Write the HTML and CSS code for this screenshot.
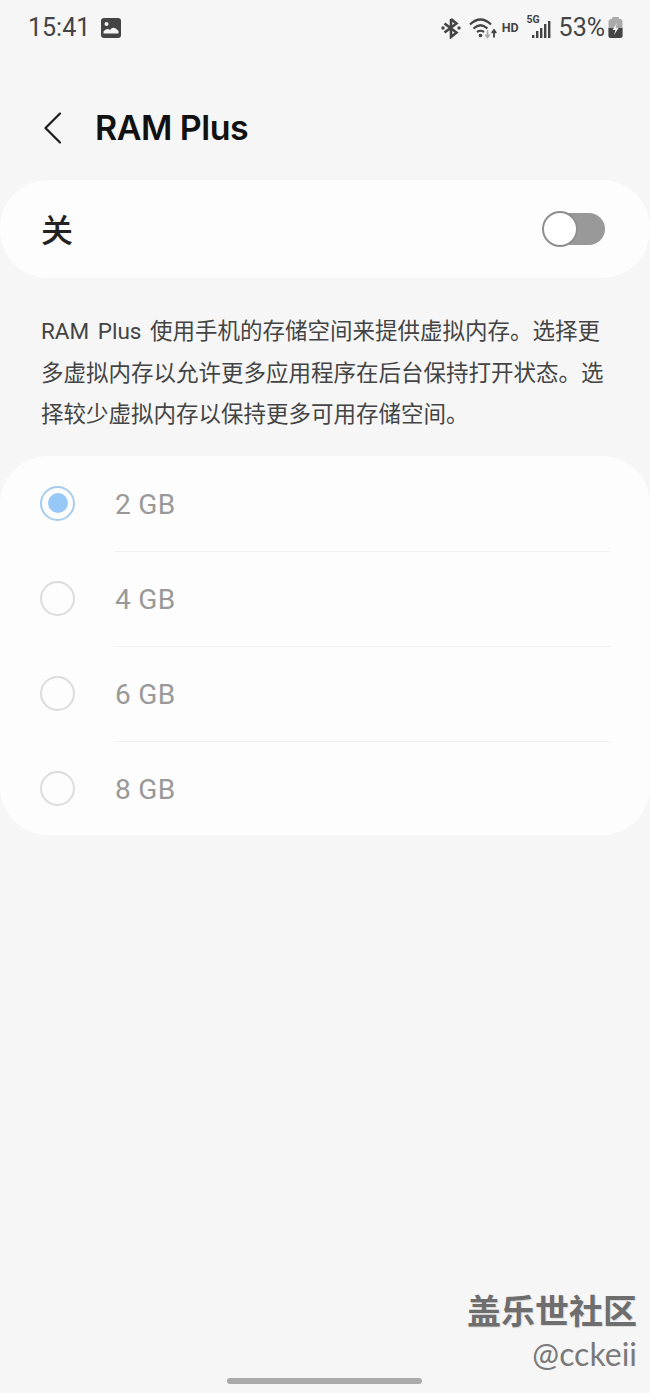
FILE: index.html
```html
<!DOCTYPE html>
<html lang="zh-CN">
<head>
  <meta charset="UTF-8">
  <meta name="viewport" content="width=device-width, initial-scale=1.0">
  <title>RAM Plus</title>
  <link rel="stylesheet" href="styles.css">
</head>
<body>
  <div class="screen">
    <div class="status-bar">
      <div class="status-left">
        <span class="clock">15:41</span>
        <svg class="pic-icon" width="20" height="20" viewBox="0 0 20 20">
          <rect x="0" y="0" width="20" height="20" rx="3" fill="#444"/>
          <circle cx="5.5" cy="6" r="2" fill="#f6f6f6"/>
          <path d="M2.5 15.5 L2.5 13.5 Q6 9.5 9 12 Q12.5 7 17.5 13 L17.5 15.5 Z" fill="#f6f6f6"/>
        </svg>
      </div>
      <div class="status-right">
        <svg class="bt-icon" width="20" height="22" viewBox="0 0 20 22" fill="none" stroke="#444" stroke-width="2.6">
          <path d="M10 2 V20 L15.5 15.5 L3.5 6.5 M10 2 L15.5 6.5 L3.5 15.5"/>
          <circle cx="2" cy="11" r="1.7" fill="#444" stroke="none"/>
          <circle cx="18" cy="11" r="1.7" fill="#444" stroke="none"/>
        </svg>
        <svg class="wifi-icon" width="28" height="22" viewBox="0 0 28 22" fill="none" stroke="#444" stroke-width="2.2">
          <path d="M1 7.5 Q11.5 -2.5 22 7.5"/>
          <path d="M4.5 11.5 Q11.5 5 18.5 11.5"/>
          <path d="M8 15 Q11.5 12.5 15 15"/>
          <circle cx="11.5" cy="18.5" r="1.8" fill="#444" stroke="none"/>
          <path d="M18.5 13 V20 M16.3 17.5 L18.5 20.5 L20.7 17.5" stroke="#aaa" stroke-width="1.6"/>
          <path d="M25 20.5 V13.5 M22.8 16 L25 13 L27.2 16" stroke-width="1.8"/>
        </svg>
        <span class="hd">HD</span>
        <div class="signal">
          <span class="five-g">5G</span>
          <svg width="19" height="20" viewBox="0 0 19 20" fill="#444">
            <rect x="0" y="15" width="2.4" height="3"/>
            <rect x="4" y="11" width="2.4" height="7"/>
            <rect x="8" y="8" width="2.4" height="10"/>
            <rect x="12" y="4" width="2.4" height="14"/>
            <rect x="16" y="1" width="2.4" height="17"/>
          </svg>
        </div>
        <span class="battery-text">53%</span>
        <svg class="battery" width="15" height="22" viewBox="0 0 15 22">
          <rect x="4" y="0" width="7" height="3" rx="1" fill="#aaa"/>
          <rect x="0.5" y="2" width="14" height="19" rx="2.5" fill="#aaa"/>
          <path d="M0.5 11 H14.5 V18.5 Q14.5 21 12 21 H3 Q0.5 21 0.5 18.5 Z" fill="#444"/>
          <path d="M9 6 L4.5 13 H7.5 L6 18 L10.5 11 H7.5 Z" fill="#f6f6f6"/>
        </svg>
      </div>
    </div>

    <div class="title-bar">
      <svg class="back" width="20" height="32" viewBox="0 0 20 32" fill="none" stroke="#1c1c1c" stroke-width="2.2" stroke-linecap="round" stroke-linejoin="round">
        <path d="M18 1.5 L3.5 16 L18 30.5"/>
      </svg>
      <h1 class="title">RAM Plus</h1>
    </div>

    <div class="card master-row">
      <span class="master-label">关</span>
      <div class="switch"><div class="switch-thumb"></div></div>
    </div>

    <p class="description">RAM Plus 使用手机的存储空间来提供虚拟内存。选择更多虚拟内存以允许更多应用程序在后台保持打开状态。选择较少虚拟内存以保持更多可用存储空间。</p>

    <div class="card options">
      <div class="option">
        <span class="radio radio-on"><span class="radio-dot"></span></span>
        <span class="option-label">2 GB</span>
      </div>
      <div class="option">
        <span class="radio"></span>
        <span class="option-label">4 GB</span>
      </div>
      <div class="option">
        <span class="radio"></span>
        <span class="option-label">6 GB</span>
      </div>
      <div class="option">
        <span class="radio"></span>
        <span class="option-label">8 GB</span>
      </div>
    </div>

    <div class="home-bar"></div>

    <div class="watermark">
      <div class="wm-title">盖乐世社区</div>
      <div class="wm-user">@cckeii</div>
    </div>
  </div>
</body>
</html>
```

FILE: styles.css
```css
html, body {
  margin: 0;
  padding: 0;
}
body {
  font-family: Roboto, "Noto Sans CJK SC", sans-serif;
  background-color: #f6f6f6;
}
.screen {
  position: relative;
  width: 650px;
  height: 1393px;
  display: flex;
  flex-direction: column;
  overflow: hidden;
}

/* status bar */
.status-bar {
  height: 55px;
  padding: 0 27px 0 28px;
  display: flex;
  align-items: center;
  justify-content: space-between;
  color: #444;
}
.status-left {
  display: flex;
  align-items: center;
  gap: 11px;
}
.clock {
  font-size: 25px;
}
.status-right {
  display: flex;
  align-items: center;
}
.bt-icon {
  margin-right: 8px;
}
.wifi-icon {
  margin-right: 5px;
}
.hd {
  font-size: 12.5px;
  font-weight: 700;
  margin-right: 8px;
}
.signal {
  position: relative;
  width: 24px;
  height: 22px;
  margin-right: 8px;
}
.signal svg {
  display: block;
  margin: 3px 0 0 5px;
}
.five-g {
  position: absolute;
  left: 0;
  top: -4px;
  font-size: 10.5px;
  font-weight: 700;
}
.battery-text {
  font-size: 25px;
  margin-right: 3px;
}

/* title */
.title-bar {
  height: 125px;
  display: flex;
  align-items: center;
  box-sizing: border-box;
  padding: 20px 0 0 42px;
}
.back {
  margin-right: 33px;
}
.title {
  margin: 0;
  font-family: Inter, Roboto, sans-serif;
  font-size: 34px;
  font-weight: 600;
  letter-spacing: -0.5px;
  color: #111;
}

/* cards */
.card {
  background-color: #fdfdfd;
}
.master-row {
  height: 98px;
  border-radius: 48px;
  display: flex;
  align-items: center;
  justify-content: space-between;
  padding: 0 45px 0 41px;
}
.master-label {
  font-size: 32px;
  font-weight: 500;
  color: #222;
  margin-top: -2px;
}
.switch {
  width: 62px;
  height: 32px;
  border-radius: 16px;
  background-color: #999;
}
.switch-thumb {
  box-sizing: border-box;
  width: 36px;
  height: 36px;
  margin: -2px 0 0 -1px;
  border-radius: 50%;
  background-color: #fff;
  border: 2px solid #8f8f8f;
}

.description {
  margin: 33px 0 0;
  padding: 0 36px 0 41px;
  font-size: 22.5px;
  line-height: 41.5px;
  word-spacing: 3px;
  color: #444;
}

.options {
  margin-top: 20px;
  height: 379px;
  box-sizing: border-box;
  border-radius: 48px;
}
.option {
  height: 95px;
  display: flex;
  align-items: center;
  padding-left: 40px;
  position: relative;
}
.option + .option::before {
  content: "";
  position: absolute;
  left: 115px;
  right: 40px;
  top: 0;
  height: 1px;
  background-color: #f1f1f1;
}
.radio {
  box-sizing: border-box;
  width: 35px;
  height: 35px;
  border-radius: 50%;
  border: 2px solid #dcdcdc;
  display: flex;
  align-items: center;
  justify-content: center;
  margin-right: 40px;
}
.radio-on {
  border-color: #a6cdec;
}
.radio-dot {
  width: 20px;
  height: 20px;
  border-radius: 50%;
  background-color: #96c8f8;
}
.option-label {
  font-size: 28px;
  color: #999;
  letter-spacing: 0.3px;
  padding-top: 3px;
}

.home-bar {
  position: absolute;
  left: 227px;
  top: 1378px;
  width: 195px;
  height: 6px;
  border-radius: 3px;
  background-color: #aaa;
}

/* watermark sits over the page */
.watermark {
  position: absolute;
  right: 13px;
  top: 1290px;
  text-align: right;
}
.wm-title {
  font-family: "Noto Sans CJK SC", sans-serif;
  font-size: 34px;
  font-weight: 700;
  line-height: 40px;
  color: #6e6e6e;
  text-shadow: 1px 1px 0 #ddd;
}
.wm-user {
  font-family: Lato, sans-serif;
  font-size: 32px;
  line-height: 36px;
  margin-top: 6px;
  color: #7a7a7a;
}
```
